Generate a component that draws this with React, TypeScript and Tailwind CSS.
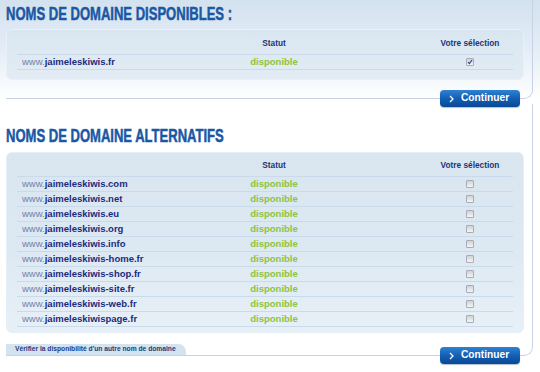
import React from 'react';

const alternatives = [
  'jaimeleskiwis.com',
  'jaimeleskiwis.net',
  'jaimeleskiwis.eu',
  'jaimeleskiwis.org',
  'jaimeleskiwis.info',
  'jaimeleskiwis-home.fr',
  'jaimeleskiwis-shop.fr',
  'jaimeleskiwis-site.fr',
  'jaimeleskiwis-web.fr',
  'jaimeleskiwispage.fr',
];

function Checkbox({ checked }: { checked?: boolean }) {
  return (
    <span className="flex h-[8px] w-[8px] items-center justify-center rounded-[1px] border border-[#a9adb3] bg-gradient-to-b from-[#cfd2d6] to-[#f4f5f6]">
      {checked && (
        <svg width="6" height="6" viewBox="0 0 6 6">
          <path d="M1 3.2 L2.4 4.6 L5 1" fill="none" stroke="#2b3f86" strokeWidth="1.1" />
        </svg>
      )}
    </span>
  );
}

function Row({ domain, checked }: { domain: string; checked?: boolean }) {
  return (
    <div className="grid h-[15px] grid-cols-[184px_146px_1fr] items-center border-t border-[#c9dbea]">
      <div className="pl-[5px] text-[9.5px] leading-none whitespace-nowrap">
        <span className="text-[#7181aa]">www.</span>
        <span className="font-bold text-[#1b2c7c]">{domain}</span>
      </div>
      <div className="text-center text-[9.5px] font-bold leading-none text-[#8cc43e]">disponible</div>
      <div className="flex w-[86px] justify-center justify-self-end">
        <Checkbox checked={checked} />
      </div>
    </div>
  );
}

function Header({ tall }: { tall?: boolean }) {
  return (
    <div className={`grid grid-cols-[184px_146px_1fr] items-center text-[8.3px] font-bold leading-none text-[#1e3478] ${tall ? 'h-[24px] pt-[3px]' : 'h-[23px] pt-[2px]'}`}>
      <div />
      <div className="text-center">Statut</div>
      <div className="w-[86px] justify-self-end text-center whitespace-nowrap">Votre sélection</div>
    </div>
  );
}

function Continuer() {
  return (
    <button className="absolute right-[12px] bottom-[-9px] flex h-[17px] w-[80px] items-center gap-[7px] rounded-[4px] bg-gradient-to-b from-[#2f82d2] via-[#135fb5] to-[#0a4893] pl-[9px] text-[10.2px] font-bold leading-none text-white shadow-[0_1px_1px_rgba(0,40,100,0.3)]">
      <svg width="5" height="8" viewBox="0 0 5 8">
        <path d="M1 1 L4 4 L1 7" fill="none" stroke="white" strokeWidth="1.3" />
      </svg>
      Continuer
    </button>
  );
}

function Title({ children }: { children: React.ReactNode }) {
  return (
    <h2 className="h-[20px] origin-left scale-x-[0.745] text-[17.5px] font-bold leading-[20px] whitespace-nowrap text-[#1a58a5] [-webkit-text-stroke:0.5px_#1a58a5]">
      {children}
    </h2>
  );
}

export default function App() {
  return (
    <div className="h-[372px] w-[540px] overflow-hidden bg-white font-['Liberation_Sans',Arial,sans-serif]">
      {/* Disponibles */}
      <div className="h-[100px] bg-gradient-to-b from-[#d3e2ef] via-[#e4edf6] to-white pl-[6px]">
        <div className="relative h-[99px] w-[527px] rounded-br-[9px] border-r border-b border-[#c8d2e6] pt-[4px]">
          <Title>NOMS DE DOMAINE DISPONIBLES :</Title>
          <div className="mt-[5px] w-[518px] rounded-[6px] border border-[#e9f0f7] bg-gradient-to-b from-[#d9e6f0] to-[#e3ecf4] px-[10px] pb-[9px]">
            <Header tall />
            <div className="border-b border-[#c9dbea]">
              <Row domain="jaimeleskiwis.fr" checked />
            </div>
          </div>
          <Continuer />
        </div>
      </div>

      {/* Alternatifs */}
      <div className="pl-[6px]">
        <div className="relative mt-[4px] h-[252px] w-[527px] rounded-br-[9px] border-r border-b border-[#c8d2e6] pt-[22px]">
          <Title>NOMS DE DOMAINE ALTERNATIFS</Title>
          <div className="mt-[6px] h-[181px] w-[518px] rounded-[6px] border border-[#e6eef6] bg-gradient-to-b from-[#d9e6f0] via-[#dce8f2] to-[#e8f0f7] px-[10px]">
            <Header />
            <div className="border-b border-[#c9dbea]">
              {alternatives.map((d) => (
                <Row key={d} domain={d} />
              ))}
            </div>
          </div>
          <div className="mt-[11px] flex h-[11px] w-[180px] items-center rounded-tr-[8px] bg-[#d4e3f0] pl-[9px] text-[6.7px] font-bold leading-none whitespace-nowrap text-[#1e3a80]">
            Vérifier la disponibilité d'un autre nom de domaine
          </div>
          <Continuer />
        </div>
      </div>
    </div>
  );
}
